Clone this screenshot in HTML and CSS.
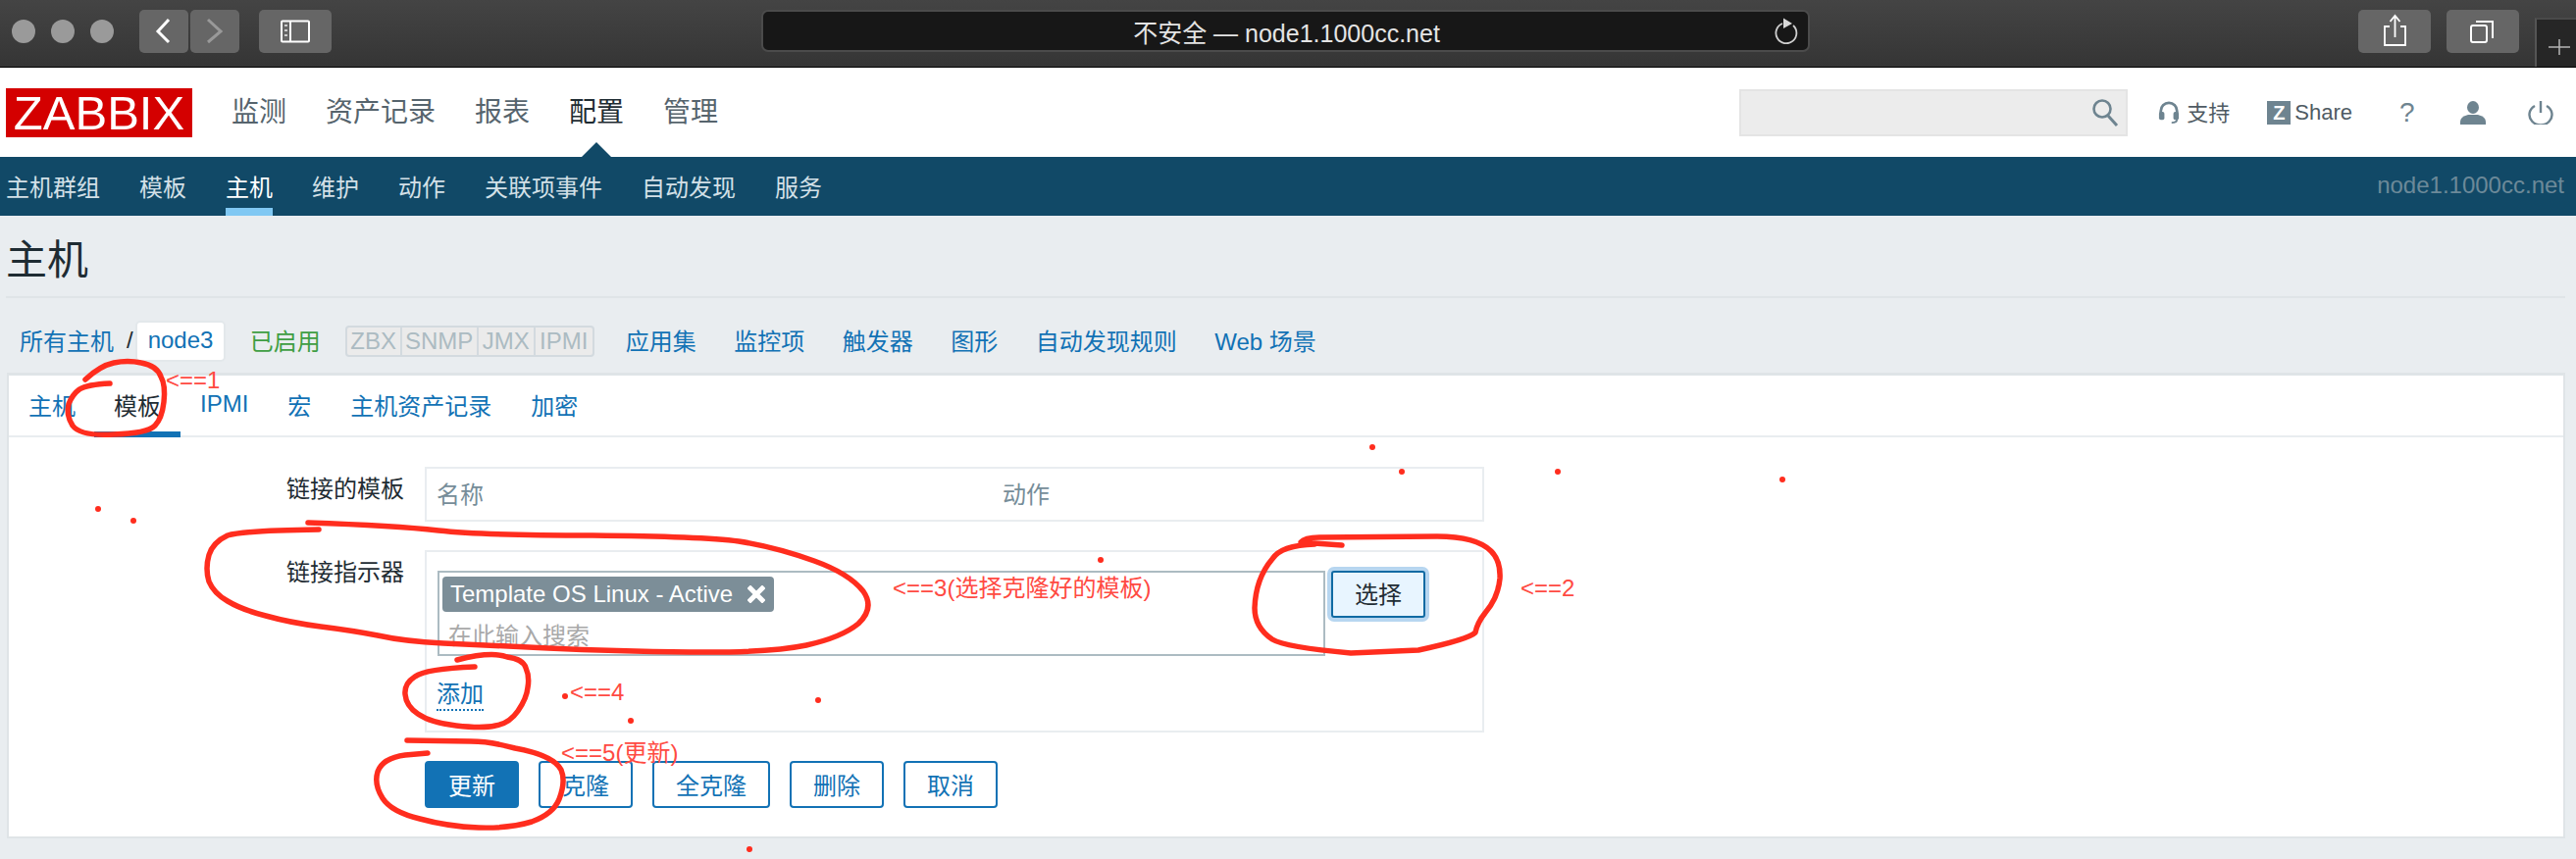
FILE: index.html
```html
<!DOCTYPE html>
<html lang="zh">
<head>
<meta charset="utf-8">
<title>主机</title>
<link rel="stylesheet" href="styles.css">
</head>
<body>
<div class="page">
  <div class="chrome">
    <div class="lights"><i></i><i></i><i></i></div>
    <div class="nav-btns">
      <div class="cbtn back"><svg width="50" height="44" viewBox="0 0 50 44"><path d="M30 10L19 22L30 33" fill="none" stroke="#fff" stroke-width="3"/></svg></div>
      <div class="cbtn back"><svg width="50" height="44" viewBox="0 0 50 44"><path d="M18 10L31 22L18 33" fill="none" stroke="#999" stroke-width="3"/></svg></div>
    </div>
    <div class="cbtn side"><svg width="74" height="44" viewBox="0 0 74 44"><rect x="23" y="11.5" width="28" height="21" rx="1" fill="none" stroke="#fff" stroke-width="2"/><path d="M32 11v22" stroke="#fff" stroke-width="2"/><path d="M26 16h3M26 21h3M26 26h3" stroke="#ccc" stroke-width="2"/></svg></div>
    <div class="address">
      <span class="address-text">不安全 — node1.1000cc.net</span>
      <svg class="reload" width="26" height="28" viewBox="0 0 26 28"><path d="M9 7A10.500 10.500 0 1 0 20 9" fill="none" stroke="#cfcfcf" stroke-width="1.800"/><path d="M10 1.500L19 7L10 12z" fill="#d8d8d8"/></svg>
    </div>
    <div class="cbtn share"><svg width="74" height="44" viewBox="0 0 74 44"><path d="M32 17h-5v19h21V17h-5" fill="none" stroke="#fff" stroke-width="1.800"/><path d="M37.500 28V7M32.500 12l5-6 5 6" fill="none" stroke="#fff" stroke-width="1.800"/></svg></div>
    <div class="cbtn tabs-btn"><svg width="74" height="44" viewBox="0 0 74 44"><rect x="25" y="16" width="16" height="17" rx="2" fill="none" stroke="#fff" stroke-width="2"/><path d="M30 12h17v17" fill="none" stroke="#fff" stroke-width="2"/></svg></div>
    <div class="plus-tab"><svg width="22" height="16" viewBox="0 0 22 16"><path d="M11 0v16M0 8h22" stroke="#b5b5b5" stroke-width="1.500"/></svg></div>
  </div>

  <header class="topbar">
    <div class="logo">ZABBIX</div>
    <nav class="mainnav">
      <a>监测</a><a>资产记录</a><a>报表</a><a class="on">配置</a><a>管理</a>
    </nav>
    <div class="search">
      <svg width="28" height="30" viewBox="0 0 28 30"><circle cx="11" cy="11" r="8.500" fill="none" stroke="#6e8490" stroke-width="2.600"/><path d="M17 18l9 10" stroke="#6e8490" stroke-width="3"/></svg>
    </div>
    <a class="tool support"><svg width="22" height="24" viewBox="0 0 24 26"><path d="M3 14V11a9 9 0 0 1 18 0v3" fill="none" stroke="#6e8490" stroke-width="3"/><rect x="1" y="12" width="6" height="9" rx="2" fill="#6e8490"/><rect x="17" y="12" width="6" height="9" rx="2" fill="#6e8490"/><path d="M21 20q0 4-6 4" fill="none" stroke="#6e8490" stroke-width="2"/></svg><span>支持</span></a>
    <a class="tool zshare"><b>Z</b><span>Share</span></a>
    <a class="tool help">?</a>
    <svg class="user" width="26" height="24" viewBox="0 0 26 24"><ellipse cx="13" cy="6.500" rx="6" ry="6.500" fill="#6e8490"/><path d="M0 24v-3q0-5 8-7h10q8 2 8 7v3z" fill="#6e8490"/></svg>
    <svg class="power" width="26" height="24" viewBox="0 0 26 24"><path d="M7 5A11.500 10.500 0 1 0 19 5" fill="none" stroke="#6e8490" stroke-width="2.400"/><path d="M13 0v12" stroke="#6e8490" stroke-width="2.400"/></svg>
  </header>

  <nav class="subnav">
    <a>主机群组</a><a>模板</a><a class="on">主机</a><a>维护</a><a>动作</a><a>关联项事件</a><a>自动发现</a><a>服务</a>
    <span class="server">node1.1000cc.net</span>
  </nav>

  <main class="content">
    <h1 class="title">主机</h1>
    <div class="crumbs">
      <a class="link">所有主机</a><span class="slash">/</span><a class="current">node3</a>
      <span class="enabled">已启用</span>
      <div class="status"><span class="s-zbx">ZBX</span><span class="s-snmp">SNMP</span><span class="s-jmx">JMX</span><span class="s-ipmi">IPMI</span></div>
      <div class="crumb-links">
        <a class="link">应用集</a><a class="link">监控项</a><a class="link">触发器</a><a class="link">图形</a><a class="link">自动发现规则</a><a class="link">Web 场景</a>
      </div>
    </div>

    <section class="card">
      <div class="tabs">
        <a class="tab tab-first">主机</a><a class="tab active">模板</a><a class="tab">IPMI</a><a class="tab">宏</a><a class="tab">主机资产记录</a><a class="tab">加密</a>
      </div>
      <div class="form">
        <div class="label">链接的模板</div>
        <div class="linked"><span class="th th-name">名称</span><span class="th">动作</span></div>

        <div class="label">链接指示器</div>
        <div class="box">
          <div class="picker">
            <div class="multi">
              <div class="tag"><span>Template OS Linux - Active</span><svg width="18" height="18" viewBox="0 0 18 18"><path d="M3 3l12 12M15 3L3 15" stroke="#fff" stroke-width="5" stroke-linecap="square"/></svg></div>
              <div class="placeholder">在此输入搜索</div>
            </div>
            <button class="select-btn">选择</button>
          </div>
          <a class="add">添加</a>
        </div>

        <div class="label-empty"></div>
        <div class="buttons">
          <button class="btn primary">更新</button>
          <button class="btn">克隆</button>
          <button class="btn">全克隆</button>
          <button class="btn">删除</button>
          <button class="btn">取消</button>
        </div>
      </div>
    </section>
  </main>

  <svg class="ink" width="2626" height="876" viewBox="0 0 2626 876">
    <g class="strokes">
      <path d="M87 387Q102 373 116 370Q130 367 144 370Q160 373 164 384Q169 393 167 410Q165 427 158 434Q150 442 116 443Q82 445 74 434Q67 423 70 412Q74 402 81 397Q89 392 112 391"/>
      <path d="M325 540Q247 541 232 546Q217 553 213 566Q209 580 213 593Q218 605 232 613Q247 622 271 628Q296 635 327 639Q359 643 385 648Q412 654 452 656Q492 658 559 661Q626 664 704 665Q783 666 822 658Q858 650 875 636Q892 620 880 603Q866 585 830 572Q791 558 753 552Q716 547 604 546Q492 546 447 541Q403 536 314 533"/>
      <path d="M1368 556L1326 553Q1330 548 1345 548L1465 547Q1505 547 1520 562Q1530 572 1529 590Q1527 610 1514 625Q1506 635 1504 645Q1497 652 1446 663L1377 666Q1310 660 1297 652Q1279 640 1279 620Q1280 590 1297 570Q1306 556 1340 555"/>
      <path d="M466 673Q501 664 517 670Q533 672 536 681Q540 690 538 701Q537 712 528 725Q519 738 505 740Q492 743 465 740Q439 737 426 728Q414 720 413 708Q412 697 423 690Q434 682 484 680"/>
      <path d="M415 755L480 756Q500 756 525 763Q564 770 572 785Q577 797 570 815Q564 830 542 838Q519 845 488 844Q457 843 428 835Q399 828 390 814Q381 800 385 787Q390 773 413 770L436 768"/>
    </g>
    <g class="dots">
      <circle cx="1399" cy="456" r="3"/><circle cx="1429" cy="481" r="3"/><circle cx="1588" cy="481" r="3"/><circle cx="1817" cy="489" r="3"/>
      <circle cx="100" cy="519" r="3"/><circle cx="136" cy="531" r="3"/><circle cx="1122" cy="571" r="3"/><circle cx="576" cy="710" r="3"/>
      <circle cx="643" cy="735" r="3"/><circle cx="834" cy="714" r="3"/><circle cx="764" cy="866" r="3"/>
    </g>
  </svg>
  <span class="note n1">&lt;==1</span>
  <span class="note n2">&lt;==2</span>
  <span class="note n3">&lt;==3(选择克隆好的模板)</span>
  <span class="note n4">&lt;==4</span>
  <span class="note n5">&lt;==5(更新)</span>
</div>
</body>
</html>
```

FILE: styles.css
```css
* { box-sizing: border-box; }
html, body { margin: 0; padding: 0; }
body {
  background: #e9edf0;
  font-family: "Liberation Sans", "Noto Sans CJK SC", sans-serif;
  font-size: 24px;
  color: #1f2c33;
  overflow: hidden;
}
.page { position: relative; width: 2626px; height: 876px; overflow: hidden; }

/* Browser chrome */
.chrome {
  height: 69px;
  display: flex;
  align-items: flex-start;
  padding: 10px 0 0 12px;
  background: linear-gradient(#444444, #353535);
  border-bottom: 1px solid #000;
}
.lights { display: flex; gap: 16px; margin-top: 10px; }
.lights i { display: block; width: 24px; height: 24px; border-radius: 50%; background: #9a9a9a; }
.nav-btns { display: flex; gap: 2px; margin-left: 26px; }
.cbtn { height: 44px; background: #666; border-radius: 5px; }
.cbtn svg { display: block; }
.back { width: 50px; }
.side { width: 74px; margin-left: 20px; }
.address {
  width: 1069px;
  height: 43px;
  margin-left: 438px;
  background: #171717;
  border: 2px solid #4b4b4b;
  border-radius: 7px;
  display: flex;
  align-items: center;
  justify-content: center;
  position: relative;
}
.address-text { color: #e4e4e4; font-size: 25px; margin-left: 2px; }
.reload { position: absolute; right: 9px; top: 5px; }
.share { width: 74px; margin-left: 559px; }
.tabs-btn { width: 74px; margin-left: 16px; }
.plus-tab {
  width: 42px;
  height: 50px;
  margin: 8px 0 0 16px;
  background: #262626;
  border-left: 2px solid #555;
  border-top: 2px solid #4a4a4a;
  padding: 20px 0 0 12px;
}
.plus-tab svg { display: block; }

/* Top bar */
.topbar { height: 91px; background: #fff; display: flex; align-items: center; padding-left: 6px; }
.logo {
  width: 190px;
  height: 50px;
  background: #d40000;
  color: #fff;
  font-size: 49px;
  line-height: 50px;
  text-align: center;
}
.mainnav { display: flex; gap: 40px; margin-left: 40px; }
.mainnav a { position: relative; font-size: 28px; line-height: 40px; color: #56646d; }
.mainnav a.on { color: #1f2c33; }
.mainnav a.on::after {
  content: "";
  position: absolute;
  left: 50%;
  top: 50px;
  margin-left: -16px;
  border-left: 16px solid transparent;
  border-right: 16px solid transparent;
  border-bottom: 16px solid #114967;
}
.search {
  width: 396px;
  height: 48px;
  margin-left: auto;
  background: #ececec;
  border: 2px solid #e4e4e4;
  display: flex;
  align-items: center;
  justify-content: flex-end;
  padding-right: 7px;
}
.search svg { display: block; }
.tool { display: flex; align-items: center; color: #4f5b63; font-size: 22px; }
.support { margin-left: 31px; gap: 7px; }
.support span { margin-top: -3px; }
.zshare { margin-left: 38px; gap: 4px; }
.zshare b { width: 24px; height: 24px; background: #6e8490; color: #fff; font-size: 20px; line-height: 24px; text-align: center; }
.help { margin-left: 48px; font-size: 28px; color: #6e8490; width: 16px; }
.user { margin-left: 46px; }
.power { margin-left: 43px; margin-right: 23px; }

/* Sub navigation */
.subnav { height: 60px; background: #114967; display: flex; align-items: stretch; gap: 40px; padding: 0 12px 0 6px; }
.subnav a { display: flex; align-items: center; color: #d3e0e7; padding-bottom: 2px; }
.subnav a.on { color: #fff; box-shadow: inset 0 -8px 0 #80c8f3; }
.server { margin-left: auto; color: #6c8999; display: flex; align-items: center; padding-bottom: 2px; }

/* Content */
.content { padding: 0 11px 0 7px; }
.title {
  margin: 0 0 0 -1px;
  height: 84px;
  padding-top: 0;
  display: flex;
  align-items: center;
  font-size: 42px;
  font-weight: 400;
  color: #1f2c33;
  border-bottom: 2px solid #dfe4e7;
}
.crumbs { display: flex; align-items: center; height: 42px; margin: 23px 0 11px; padding-left: 13px; }
.link { color: #1272b5; padding-bottom: 3px; }
.slash { margin: 0 2px 0 13px; color: #1f2c33; padding-bottom: 2px; }
.current { color: #1272b5; background: #fff; border: 2px solid #e3e8eb; border-radius: 5px; padding: 0 11px; height: 42px; line-height: 36px; width: 92px; }
.enabled { margin-left: 25px; color: #3f9e43; padding-bottom: 3px; }
.status {
  display: flex;
  margin-left: 25px;
  width: 254px;
  height: 32px;
  background: #ebebeb;
  border: 2px solid #d3dadf;
  border-radius: 4px;
  color: #acbbc2;
  line-height: 28px;
}
.status span { text-align: center; border-right: 2px solid #d3dadf; }
.s-zbx { width: 56px; }
.s-snmp { width: 78px; }
.s-jmx { width: 58px; }
.status .s-ipmi { flex: 1; border-right: 0; }
.crumb-links { display: flex; gap: 38.5px; margin-left: 32px; }

/* Card */
.card { background: #fff; border: 2px solid #dfe4e7; border-top-width: 3px; height: 475px; }
.tabs { display: flex; height: 63px; border-bottom: 2px solid #e9edf0; }
.tab { display: flex; align-items: center; padding: 0 20px 5px; height: 63px; color: #1272b5; }
.tab-first { padding-right: 19px; }
.tab.active { color: #1f2c33; box-shadow: inset 0 -6px 0 #1272b5; }

.form {
  display: grid;
  grid-template-columns: 403px 1080px;
  column-gap: 21px;
  row-gap: 29px;
  padding-top: 30px;
}
.label { text-align: right; line-height: 30px; padding-top: 8px; }
.linked {
  height: 56px;
  border: 2px solid #e9edf0;
  display: flex;
  align-items: center;
  padding: 0 0 4px 10px;
}
.th { color: #768d99; }
.th-name { width: 577px; }
.box { height: 186px; border: 2px solid #e9edf0; padding: 19px 0 0 11px; }
.picker { display: flex; align-items: flex-start; gap: 6px; }
.multi { width: 905px; height: 87px; border: 2px solid #acbbc2; padding: 4px 3px 3px; }
.tag {
  width: 338px;
  height: 36px;
  background: #7c8e98;
  border-radius: 4px;
  color: #fff;
  display: flex;
  align-items: center;
  justify-content: space-between;
  padding: 0 9px 0 8px;
}
.placeholder { margin: 10px 0 0 6px; line-height: 30px; color: #a9a9a9; }
.select-btn {
  width: 96px;
  height: 48px;
  padding: 0 0 3px;
  font: inherit;
  color: #1f2c33;
  background: #e8f5ff;
  border: 2px solid #0f6aa3;
  border-radius: 3px;
  box-shadow: 0 0 0 4px #b7d6f0;
}
.add {
  display: inline-block;
  margin: 24px 0 0 -1px;
  line-height: 30px;
  color: #1272b5;
  border-bottom: 2px dotted #1272b5;
}
.buttons { display: flex; gap: 20px; }
.btn {
  height: 48px;
  padding: 0 22px 2px;
  font: inherit;
  color: #1272b5;
  background: #fff;
  border: 2px solid #1272b5;
  border-radius: 4px;
}
.btn.primary { color: #fff; background: #1272b5; }

/* Hand-drawn annotations lying over the page */
.ink { position: absolute; left: 0; top: 0; pointer-events: none; }
.strokes path { fill: none; stroke: #ff2d1e; stroke-width: 5.5; stroke-linecap: round; stroke-linejoin: round; }
.dots circle { fill: #ff2d1e; }
.note { position: absolute; color: #ff4a42; line-height: 30px; white-space: nowrap; }
.n1 { left: 169px; top: 373px; }
.n2 { left: 1550px; top: 585px; }
.n3 { left: 910px; top: 585px; }
.n4 { left: 581px; top: 691px; }
.n5 { left: 572px; top: 753px; }
```
